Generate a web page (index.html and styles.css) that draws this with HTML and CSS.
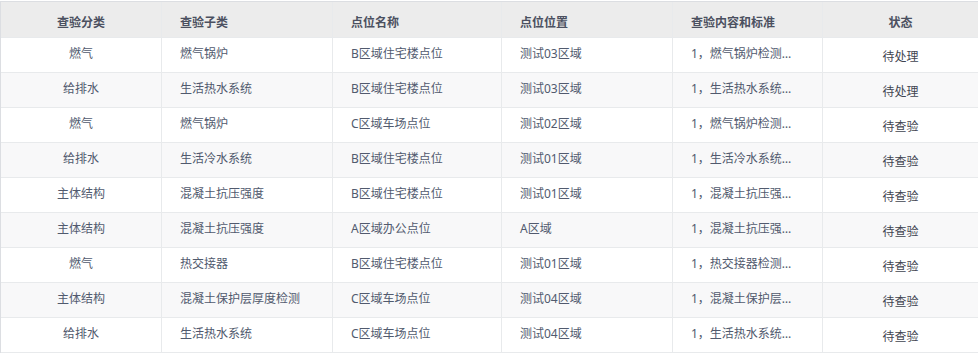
FILE: index.html
```html
<!DOCTYPE html>
<html lang="zh-CN">
<head>
<meta charset="utf-8">
<title>查验列表</title>
<link rel="stylesheet" href="styles.css">
</head>
<body>
<div class="table-wrap">
<table class="grid">
<colgroup>
<col class="c1"><col class="c2"><col class="c3"><col class="c4"><col class="c5"><col class="c6">
</colgroup>
<thead>
<tr>
<th class="center">查验分类</th>
<th>查验子类</th>
<th>点位名称</th>
<th>点位位置</th>
<th>查验内容和标准</th>
<th class="center">状态</th>
</tr>
</thead>
<tbody>
<tr>
<td class="center">燃气</td><td>燃气锅炉</td><td>B区域住宅楼点位</td><td>测试03区域</td>
<td class="brief">1，燃气锅炉检测…</td><td class="status"><span>待处理</span></td>
</tr>
<tr>
<td class="center">给排水</td><td>生活热水系统</td><td>B区域住宅楼点位</td><td>测试03区域</td>
<td class="brief">1，生活热水系统…</td><td class="status"><span>待处理</span></td>
</tr>
<tr>
<td class="center">燃气</td><td>燃气锅炉</td><td>C区域车场点位</td><td>测试02区域</td>
<td class="brief">1，燃气锅炉检测…</td><td class="status"><span>待查验</span></td>
</tr>
<tr>
<td class="center">给排水</td><td>生活冷水系统</td><td>B区域住宅楼点位</td><td>测试01区域</td>
<td class="brief">1，生活冷水系统…</td><td class="status"><span>待查验</span></td>
</tr>
<tr>
<td class="center">主体结构</td><td>混凝土抗压强度</td><td>B区域住宅楼点位</td><td>测试01区域</td>
<td class="brief">1，混凝土抗压强…</td><td class="status"><span>待查验</span></td>
</tr>
<tr>
<td class="center">主体结构</td><td>混凝土抗压强度</td><td>A区域办公点位</td><td>A区域</td>
<td class="brief">1，混凝土抗压强…</td><td class="status"><span>待查验</span></td>
</tr>
<tr>
<td class="center">燃气</td><td>热交接器</td><td>B区域住宅楼点位</td><td>测试01区域</td>
<td class="brief">1，热交接器检测…</td><td class="status"><span>待查验</span></td>
</tr>
<tr>
<td class="center">主体结构</td><td>混凝土保护层厚度检测</td><td>C区域车场点位</td><td>测试04区域</td>
<td class="brief">1，混凝土保护层…</td><td class="status"><span>待查验</span></td>
</tr>
<tr>
<td class="center">给排水</td><td>生活热水系统</td><td>C区域车场点位</td><td>测试04区域</td>
<td class="brief">1，生活热水系统…</td><td class="status"><span>待查验</span></td>
</tr>
</tbody>
</table>
</div>
</body>
</html>
```

FILE: styles.css
```css
html, body {
  margin: 0;
  padding: 0;
  background: #ffffff;
}

body {
  overflow: hidden;
  font-family: "Noto Sans", "Noto Sans CJK SC", sans-serif;
  font-size: 12px;
  color: #515a6e;
}

.table-wrap {
  padding-top: 1px;
  width: 979px;
}

.grid {
  width: 979px;
  table-layout: fixed;
  border-collapse: separate;
  border-spacing: 0;
  border-top: 1px solid #dcdee2;
  border-left: 1px solid #dcdee2;
}

.c1 { width: 161px; }
.c2 { width: 171px; }
.c3 { width: 169px; }
.c4 { width: 171px; }
.c5 { width: 150px; }
.c6 { width: 156px; }

.grid th,
.grid td {
  box-sizing: border-box;
  border-right: 1px solid #e8eaec;
  border-bottom: 1px solid #e8eaec;
  padding: 0 18px;
  text-align: left;
  vertical-align: middle;
  white-space: nowrap;
}

.grid th {
  height: 36px;
  padding-top: 4px;
  background: #ececec;
  font-weight: bold;
  color: #4b5060;
}

.grid td {
  height: 35px;
  padding-bottom: 4px;
}

.grid tbody tr:nth-child(even) td {
  background: #f8f8f9;
}

.grid .center {
  text-align: center;
}

.grid .brief {
  padding-right: 12px;
}

.grid .status {
  text-align: center;
  padding-bottom: 0;
  padding-top: 2px;
  color: #3f4450;
}
```
